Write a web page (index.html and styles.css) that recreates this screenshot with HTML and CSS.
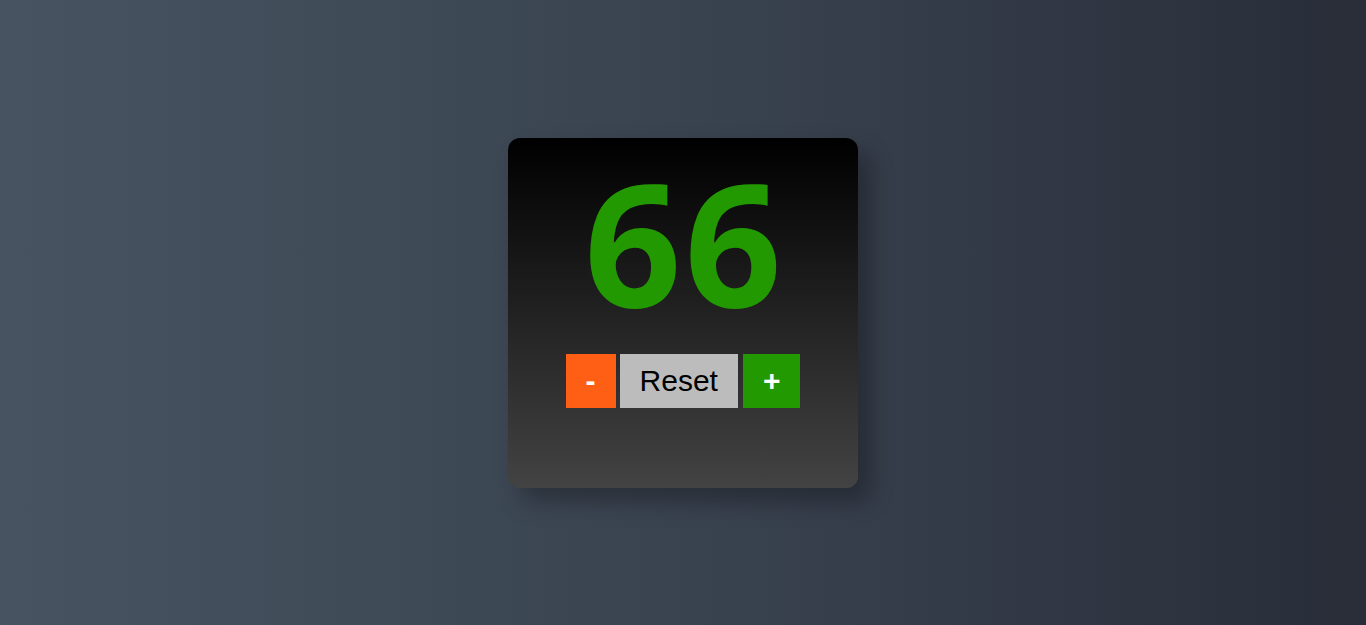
FILE: index.html
```html
<!DOCTYPE html>
<html lang="en">
<head>
<meta charset="utf-8">
<title>Counter</title>
<link rel="stylesheet" href="styles.css">
</head>
<body>
<main class="page">
  <section class="card">
    <div class="count">66</div>
    <div class="controls">
      <button class="btn btn-dec">-</button>
      <button class="btn btn-reset">Reset</button>
      <button class="btn btn-inc">+</button>
    </div>
  </section>
</main>
</body>
</html>
```
FILE: styles.css
```css
html, body {
  margin: 0;
  padding: 0;
  height: 100%;
}
body {
  background: linear-gradient(to right, #475361 0%, #3f4a57 30%, #353d4a 65%, #282d38 100%);
  font-family: "Liberation Sans", Arial, sans-serif;
}
.page {
  height: 100%;
  display: flex;
  justify-content: center;
  padding-top: 138px;
  box-sizing: border-box;
}
.card {
  width: 350px;
  height: 350px;
  box-sizing: border-box;
  border-radius: 12px;
  background: linear-gradient(to bottom, #000000, #434343);
  box-shadow: 12px 14px 24px rgba(0, 0, 0, 0.3);
  display: flex;
  flex-direction: column;
  align-items: center;
  padding-top: 18px;
}
.count {
  font-family: "Open Sans", sans-serif;
  font-weight: 700;
  font-size: 170px;
  line-height: 1;
  color: #229900;
  height: 170px;
  letter-spacing: 3px;
  padding-left: 3px;
}
.controls {
  margin-top: 28px;
  display: flex;
  gap: 4px;
}
.btn {
  border: none;
  border-radius: 0;
  margin: 0;
  padding: 10px 20px;
  font-family: "Liberation Sans", Arial, sans-serif;
  font-size: 30px;
  line-height: 34px;
  cursor: pointer;
}
.btn-dec {
  background: #ff5f14;
  color: #ffffff;
  font-weight: 700;
}
.btn-reset {
  background: #bcbcbc;
  color: #000000;
}
.btn-inc {
  background: #229900;
  color: #ffffff;
  font-weight: 700;
  margin-left: 1px;
}
```
